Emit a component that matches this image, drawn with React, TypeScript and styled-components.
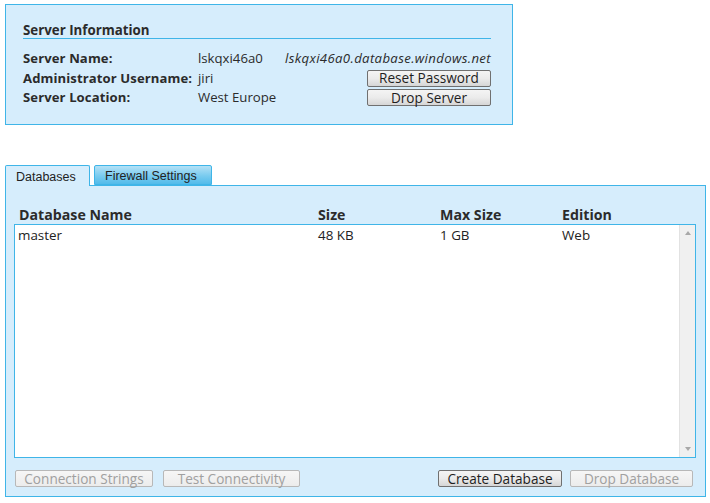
import React from "react";
import styled, { createGlobalStyle, css } from "styled-components";

const Global = createGlobalStyle`
  body {
    margin: 0;
    background: #ffffff;
    font-family: "Open Sans", "DejaVu Sans", sans-serif;
    font-size: 13px;
    color: #222;
  }
`;

const Page = styled.div`
  width: 710px;
  height: 503px;
  padding: 4px 0 0 5px;
  box-sizing: border-box;
`;

const InfoPanel = styled.div`
  width: 508px;
  height: 121px;
  box-sizing: border-box;
  background: #d6edfc;
  border: 1px solid #3fb5e8;
  padding: 17px 21px 0 17px;
`;

const InfoTitle = styled.div`
  font-weight: bold;
  font-size: 13.3px;
  line-height: 16px;
  color: #2b2b2b;
  border-bottom: 1px solid #3fb5e8;
  margin-bottom: 11px;
`;

const InfoGrid = styled.div`
  display: grid;
  grid-template-columns: 175px 85px 1fr;
  row-gap: 2.5px;
  align-items: center;
`;

const Label = styled.div`
  font-weight: bold;
  font-size: 13.1px;
  letter-spacing: 0.1px;
  color: #2b2b2b;
  line-height: 17px;
  white-space: nowrap;
`;

const Value = styled.div`
  font-size: 13.2px;
  color: #2b2b2b;
  line-height: 17px;
`;

const Right = styled.div<{ $italic?: boolean }>`
  display: flex;
  justify-content: flex-end;
  font-size: 13.2px;
  line-height: 17px;
  color: #2b2b2b;
  ${(p) =>
    p.$italic &&
    css`
      font-style: italic;
      letter-spacing: 0.35px;
    `}
`;

const Button = styled.button<{ $w: number; $disabled?: boolean; $ml?: number }>`
  width: ${(p) => p.$w}px;
  height: 17px;
  margin-left: ${(p) => p.$ml ?? 0}px;
  padding: 0;
  font-family: "Open Sans", "DejaVu Sans", sans-serif;
  font-size: 13.6px;
  line-height: 14px;
  border-radius: 2px;
  border: 1px solid ${(p) => (p.$disabled ? "#b8b8b8" : "#707070")};
  color: ${(p) => (p.$disabled ? "#a0a0a0" : "#1e1e1e")};
  background: ${(p) =>
    p.$disabled
      ? "linear-gradient(#f6f6f6, #ececec)"
      : "linear-gradient(#f4f4f4 0%, #ebebeb 50%, #d6d6d6 100%)"};
`;

const Tabs = styled.div`
  display: flex;
  gap: 4px;
  margin-top: 40px;
  height: 20px;
  position: relative;
  z-index: 1;
`;

const Tab = styled.div<{ $active?: boolean }>`
  box-sizing: border-box;
  height: ${(p) => (p.$active ? 21 : 20)}px;
  padding: 1px 10px 0;
  display: flex;
  align-items: center;
  font-family: "Liberation Sans", Arial, sans-serif;
  font-size: 12.5px;
  color: #222;
  border: 1px solid #3fb5e8;
  border-bottom: ${(p) => (p.$active ? "none" : "1px solid #3fb5e8")};
  border-radius: 2px 2px 0 0;
  ${(p) =>
    p.$active
      ? css`
          width: 85px;
          background: #d6edfc;
        `
      : css`
          width: 118px;
          background: linear-gradient(#b4e1f6 0%, #79cbef 55%, #52bbea 100%);
        `}
`;

const MainPanel = styled.div`
  width: 701px;
  height: 312px;
  box-sizing: border-box;
  background: #d6edfc;
  border: 1px solid #3fb5e8;
  padding: 20px 9px 0 8px;
  display: flex;
  flex-direction: column;
`;

const HeadRow = styled.div`
  display: grid;
  grid-template-columns: 299px 122px 122px 1fr;
  padding-left: 5px;
  font-weight: bold;
  font-size: 14.2px;
  color: #2b2b2b;
  line-height: 18px;
`;

const List = styled.div`
  height: 234px;
  box-sizing: border-box;
  background: #fff;
  border: 1px solid #3fb5e8;
  display: flex;
`;

const Rows = styled.div`
  flex: 1;
  padding: 2px 0 0 3px;
`;

const Row = styled.div`
  display: grid;
  grid-template-columns: 300px 122px 122px 1fr;
  font-size: 13.4px;
  line-height: 17px;
  color: #222;
`;

const Scrollbar = styled.div`
  width: 16px;
  background: #f0f0f0;
  border-left: 1px solid #e2e2e2;
  display: flex;
  flex-direction: column;
  justify-content: space-between;
  align-items: center;
  padding: 6px 0;
  box-sizing: border-box;
`;

const Arrow = styled.div<{ $down?: boolean }>`
  width: 0;
  height: 0;
  border-left: 3.5px solid transparent;
  border-right: 3.5px solid transparent;
  ${(p) =>
    p.$down
      ? css`border-top: 4px solid #a8a8a8;`
      : css`border-bottom: 4px solid #a8a8a8;`}
`;

const Footer = styled.div`
  display: flex;
  margin-top: 12px;
  padding: 0 3px 0 1px;
`;

const Spacer = styled.div`
  flex: 1;
`;

export default function App() {
  return (
    <Page>
      <Global />
      <InfoPanel>
        <InfoTitle>Server Information</InfoTitle>
        <InfoGrid>
          <Label>Server Name:</Label>
          <Value>lskqxi46a0</Value>
          <Right $italic>lskqxi46a0.database.windows.net</Right>
          <Label>Administrator Username:</Label>
          <Value>jiri</Value>
          <Right>
            <Button $w={124}>Reset Password</Button>
          </Right>
          <Label>Server Location:</Label>
          <Value>West Europe</Value>
          <Right>
            <Button $w={124}>Drop Server</Button>
          </Right>
        </InfoGrid>
      </InfoPanel>

      <Tabs>
        <Tab $active>Databases</Tab>
        <Tab>Firewall Settings</Tab>
      </Tabs>
      <MainPanel>
        <HeadRow>
          <div>Database Name</div>
          <div>Size</div>
          <div>Max Size</div>
          <div>Edition</div>
        </HeadRow>
        <List>
          <Rows>
            <Row>
              <div>master</div>
              <div>48 KB</div>
              <div>1 GB</div>
              <div>Web</div>
            </Row>
          </Rows>
          <Scrollbar>
            <Arrow />
            <Arrow $down />
          </Scrollbar>
        </List>
        <Footer>
          <Button $w={138} $disabled>Connection Strings</Button>
          <Button $w={137} $disabled $ml={10}>Test Connectivity</Button>
          <Spacer />
          <Button $w={124}>Create Database</Button>
          <Button $w={123} $disabled $ml={8}>Drop Database</Button>
        </Footer>
      </MainPanel>
    </Page>
  );
}
